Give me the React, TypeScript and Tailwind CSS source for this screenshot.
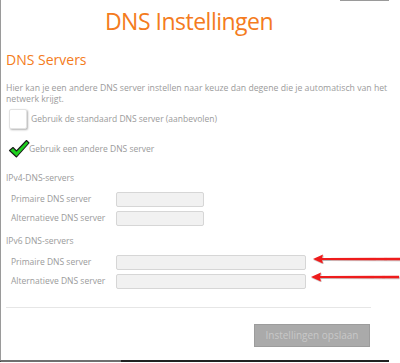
function Arrow() {
  return (
    <svg width="90" height="10" viewBox="0 0 90 10">
      <defs>
        <filter id="sh" x="-10%" y="-50%" width="120%" height="200%">
          <feDropShadow dx="0.6" dy="0.8" stdDeviation="0.6" floodColor="#000" floodOpacity="0.35" />
        </filter>
      </defs>
      <g filter="url(#sh)">
        <polygon points="0,5 10,0.5 9,4 88,3.8 88,6.2 9,6 10,9.5" fill="#ee1c1c" />
      </g>
    </svg>
  );
}

function Check() {
  return (
    <svg width="22" height="20" viewBox="0 0 22 20">
      <path
        d="M1.5 11.5 L5 8.5 L8.5 12 L18.5 1.5 L21 4 L8.5 18 Z"
        fill="#1fd11f"
        stroke="#1a1a1a"
        strokeWidth="1.1"
        strokeLinejoin="round"
      />
    </svg>
  );
}

function Row({ label, wide }: { label: string; wide?: boolean }) {
  return (
    <div className="flex items-center h-[19px]">
      <span className="w-[115px] pl-[10px] text-[8.5px] text-[#9b9b9b]">{label}</span>
      <div
        className={`${wide ? "w-[190px]" : "w-[88px]"} h-[15px] bg-[#f1f1f1] border border-[#d6d6d6] rounded-[2px]`}
      />
    </div>
  );
}

export default function App() {
  return (
    <div className="w-[400px] h-[363px] bg-white font-['Open_Sans',sans-serif]">
      <div className="relative w-[389px] h-[362px] border-l border-[#9a9a9a] border-b-2 border-b-[#222] flex flex-col">
        <div className="flex">
          <div className="w-[339px]" />
          <div className="flex-1 h-px bg-[#9a9a9a]" />
        </div>
        <h1 className="mt-[5px] text-center text-[23px] tracking-[-0.5px] leading-[31px] text-[#f47b20] pr-[12px]">
          DNS Instellingen
        </h1>
        <h2 className="mt-[14px] pl-[5px] text-[14px] leading-[18px] text-[#f47b20]">DNS Servers</h2>
        <p className="mt-[14px] pl-[5px] text-[8.7px] leading-[11px] text-[#9b9b9b] w-[395px]">
          Hier kan je een andere DNS server instellen naar keuze dan degene die je automatisch van het netwerk krijgt.
        </p>
        <div className="mt-[4px] pl-[8px] flex items-center gap-[4px]">
          <div className="w-[18px] h-[20px] rounded-[2px] border border-[#e2e2e2] shadow-[1px_1px_2px_rgba(0,0,0,0.3)] bg-white" />
          <span className="text-[8.5px] text-[#9b9b9b]">Gebruik de standaard DNS server (aanbevolen)</span>
        </div>
        <div className="mt-[10px] pl-[7px] flex items-center">
          <Check />
          <span className="-ml-[1px] text-[8.5px] text-[#9b9b9b]">Gebruik een andere DNS server</span>
        </div>
        <div className="mt-[13px] pl-[5px] text-[8.5px] text-[#9b9b9b]">IPv4-DNS-servers</div>
        <div className="mt-[5px] flex flex-col">
          <Row label="Primaire DNS server" />
          <Row label="Alternatieve DNS server" />
        </div>
        <div className="mt-[7px] pl-[5px] text-[8.5px] text-[#9b9b9b]">IPv6 DNS-servers</div>
        <div className="mt-[5px] flex flex-col">
          <Row label="Primaire DNS server" wide />
          <Row label="Alternatieve DNS server" wide />
        </div>
        <div className="mt-[16px] ml-[5px] w-[365px] h-px bg-[#e6e6e6]" />
        <div className="mt-[16px] flex justify-end pr-[19px]">
          <button className="w-[116px] h-[23px] bg-[#aaaaaa] border border-[#9c9c9c] text-[10px] text-[#c8c8c8]">
            Instellingen opslaan
          </button>
        </div>
        <div className="absolute left-[312px] top-[254px]">
          <Arrow />
        </div>
        <div className="absolute left-[310px] top-[272px]">
          <Arrow />
        </div>
        <div className="absolute left-0 bottom-[-2px] w-[120px] h-[2px] bg-[#6f6f6f]" />
      </div>
    </div>
  );
}
